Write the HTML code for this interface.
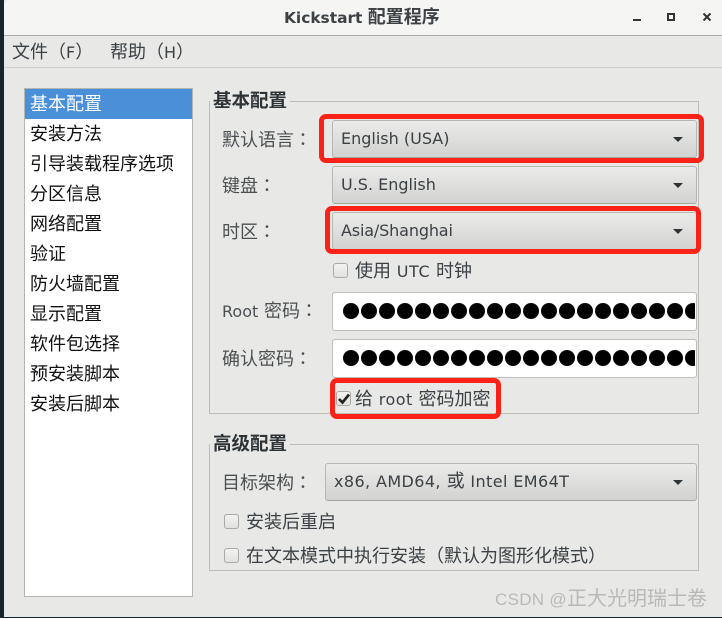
<!DOCTYPE html>
<html><head><meta charset="utf-8"><style>
html,body{margin:0;padding:0}
body{width:722px;height:618px;overflow:hidden;position:relative;background:#e8e8e7;font-family:"DejaVu Sans","Noto Sans CJK SC",sans-serif;font-size:18px;color:#2e3436}
div{position:absolute;box-sizing:border-box;white-space:nowrap}
i{font-style:normal;font-size:16px}
b{font-weight:normal;font-family:"Noto Sans CJK TC",sans-serif}
.t{line-height:24px;height:24px}
.lb{color:#4b5052}
.li{left:30px;color:#111;font-size:18px;line-height:30px;height:30px}
.combo{height:38px;border:1px solid #b6b6b3;border-bottom-color:#a5a5a2;border-radius:3px;background:linear-gradient(#ebebea,#d2d2d0);line-height:36px;padding-left:8px;color:#3b4144}
.combo:after{content:"";position:absolute;right:13px;top:16px;border-left:5px solid transparent;border-right:5px solid transparent;border-top:5px solid #2e3436}
.entry{left:332px;width:365px;background:#fff;border:1px solid #bdbdba;border-radius:3px;overflow:hidden}
.clip{position:absolute;left:0;top:0;width:362px;height:100%;overflow:hidden}
.dots{position:absolute;left:10px;top:10px;width:360px;height:16px;background:radial-gradient(circle at 8px 8px,#000 7.7px,transparent 8.3px) 0 0/18px 16px repeat-x}
.cb{width:15px;height:15px;border:1px solid #a9a9a6;border-radius:3px;background:linear-gradient(#f2f2f1,#e2e2e0)}
.grp{left:209px;width:490px;border:1px solid #bcbcb9}
.leg{font-weight:bold;font-size:18.5px;background:#e8e8e7;padding:0 3px;left:210px;line-height:22px;height:22px;color:#2e3436}
.red{border:5px solid #fb2318;border-radius:7px}
</style></head><body>
<div style="left:0;top:0;width:4px;height:618px;background:#14252e"></div>
<div style="left:0;top:617px;width:722px;height:1px;background:#14252e"></div>
<div style="left:4px;top:0;width:718px;height:36px;background:#f5f5f4;border-bottom:1px solid #a9a9a6;border-top-left-radius:5px"></div>
<div class="t" style="left:284px;top:6px;font-weight:bold;color:#3c4144;font-size:18px"><i style="font-size:15.4px">Kickstart </i>配置程序</div>
<div style="left:633px;top:19px;width:8px;height:2px;background:#333"></div>
<div style="left:667px;top:13px;width:8px;height:8px;border:2px solid #333"></div>
<svg style="position:absolute;left:702px;top:12px" width="10" height="10"><path d="M1.5 1.5L8.5 8.5M8.5 1.5L1.5 8.5" stroke="#333" stroke-width="2"/></svg>
<div style="left:4px;top:67px;width:718px;height:1px;background:#cfcfcc"></div>
<div class="t" style="left:12px;top:41px;color:#3b4144">文件（<i>F</i>）</div>
<div class="t" style="left:110px;top:41px;color:#3b4144">帮助（<i>H</i>）</div>

<div style="left:24px;top:88px;width:169px;height:509px;background:#fff;border:1px solid #b6b6b1"></div>
<div style="left:25px;top:89px;width:167px;height:30px;background:#4a90d9"></div>
<div class="li" style="top:90px;color:#fff">基本配置</div>
<div class="li" style="top:120px">安装方法</div>
<div class="li" style="top:150px">引导装载程序选项</div>
<div class="li" style="top:180px">分区信息</div>
<div class="li" style="top:210px">网络配置</div>
<div class="li" style="top:240px">验证</div>
<div class="li" style="top:270px">防火墙配置</div>
<div class="li" style="top:300px">显示配置</div>
<div class="li" style="top:330px">软件包选择</div>
<div class="li" style="top:360px">预安装脚本</div>
<div class="li" style="top:390px">安装后脚本</div>

<div class="grp" style="top:101px;height:313px"></div>
<div class="leg" style="top:91px">基本配置</div>
<div class="t lb" style="left:222px;top:127px">默认语言<b>：</b></div>
<div class="combo" style="left:332px;top:120px;width:365px"><i>English (USA)</i></div>
<div class="t lb" style="left:222px;top:173px">键盘<b>：</b></div>
<div class="combo" style="left:332px;top:166px;width:365px"><i>U.S. English</i></div>
<div class="t lb" style="left:222px;top:219px">时区<b>：</b></div>
<div class="combo" style="left:332px;top:212px;width:365px"><i style="letter-spacing:-.15px">Asia/Shanghai</i></div>
<div class="cb" style="left:333px;top:263px"></div>
<div class="t" style="left:355px;top:260px;color:#3b4144">使用 <i style="letter-spacing:.6px">UTC</i> 时钟</div>
<div class="t lb" style="left:222px;top:298px"><i>Root</i> 密码<b>：</b></div>
<div class="entry" style="top:292px;height:39px"><div class="clip"><div class="dots"></div></div></div>
<div class="t lb" style="left:222px;top:346px">确认密码<b>：</b></div>
<div class="entry" style="top:339px;height:39px"><div class="clip"><div class="dots"></div></div></div>
<div class="cb" style="left:336px;top:391px"></div>
<svg style="position:absolute;left:336px;top:391px" width="16" height="16"><path d="M3 8L6.5 11.5L13 3.5" fill="none" stroke="#222" stroke-width="2.6"/></svg>
<div class="t" style="left:355px;top:388px;color:#3b4144">给 <i style="letter-spacing:.5px">root</i> 密码加密</div>

<div class="red" style="left:319px;top:114px;width:385px;height:49px"></div>
<div class="red" style="left:325px;top:206px;width:376px;height:48px"></div>
<div class="red" style="left:330px;top:378px;width:171px;height:41px"></div>

<div class="grp" style="top:444px;height:127px"></div>
<div class="leg" style="top:434px">高级配置</div>
<div class="t lb" style="left:222px;top:470px">目标架构<b>：</b></div>
<div class="combo" style="left:325px;top:463px;width:372px"><i style="letter-spacing:.4px">x86, AMD64,</i> 或 <i style="letter-spacing:.4px">Intel EM64T</i></div>
<div class="cb" style="left:224px;top:514px"></div>
<div class="t" style="left:246px;top:511px;color:#3b4144">安装后重启</div>
<div class="cb" style="left:224px;top:548px"></div>
<div class="t" style="left:246px;top:545px;color:#3b4144">在文本模式中执行安装（默认为图形化模式）</div>

<div class="t" style="left:495px;top:587px;color:#b9b9b7;font-size:20px;font-family:'Liberation Sans','Noto Sans CJK SC',sans-serif"><i style="font-size:17px;letter-spacing:.3px">CSDN @</i>正大光明瑞士卷</div>
</body></html>
